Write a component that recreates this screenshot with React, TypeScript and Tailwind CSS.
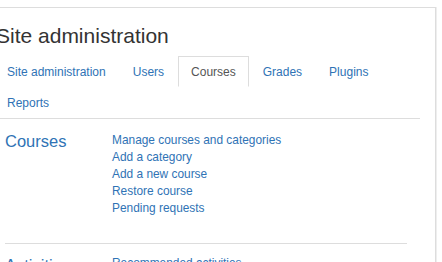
const tabs = ["Site administration", "Users", "Courses", "Grades", "Plugins", "Reports"];

const courseLinks = [
  "Manage courses and categories",
  "Add a category",
  "Add a new course",
  "Restore course",
  "Pending requests",
];

export default function App() {
  return (
    <div className="h-[262px] w-[442px] overflow-hidden bg-white pt-[7px] font-['Liberation_Sans',Arial,sans-serif] text-[#333]">
      <div className="-ml-[25px] w-[461px] border border-[#dddddd] pl-[18px] pr-[15px] shadow-[1px_0_0_#eeeeee]">
        <h2 className="mb-[8px] ml-[2px] mt-[15px] text-[21px] leading-[25px] font-normal">Site administration</h2>

        <ul className="flex flex-wrap border-b border-[#dddddd] text-[12px]">
          {tabs.map((t) =>
            t === "Courses" ? (
              <li
                key={t}
                className="-mb-px mr-px h-[31px] border border-[#dddddd] border-b-transparent bg-white px-[12px] leading-[30px] text-[#555]"
              >
                {t}
              </li>
            ) : (
              <li key={t} className="mr-px h-[31px] border border-transparent px-[12px] leading-[30px] text-[#2f73b5]">
                {t}
              </li>
            )
          )}
        </ul>

        <div className="pl-[11px] pr-[13px]">
          <div className="flex pt-[13px] pb-[26px]">
            <h3 className="w-[107px] text-[16.5px] leading-[19px] font-normal text-[#2f73b5]">Courses</h3>
            <ul className="text-[11.9px] leading-[17px] text-[#2f73b5]">
              {courseLinks.map((l) => (
                <li key={l}>{l}</li>
              ))}
            </ul>
          </div>
          <div className="border-t border-[#dddddd]" />
          <div className="flex pt-[11px]">
            <h3 className="w-[107px] text-[16.5px] leading-[20px] font-normal text-[#2f73b5]">Activities</h3>
            <ul className="text-[11.9px] leading-[17px] text-[#2f73b5]">
              <li>Recommended activities</li>
            </ul>
          </div>
        </div>
      </div>
    </div>
  );
}
